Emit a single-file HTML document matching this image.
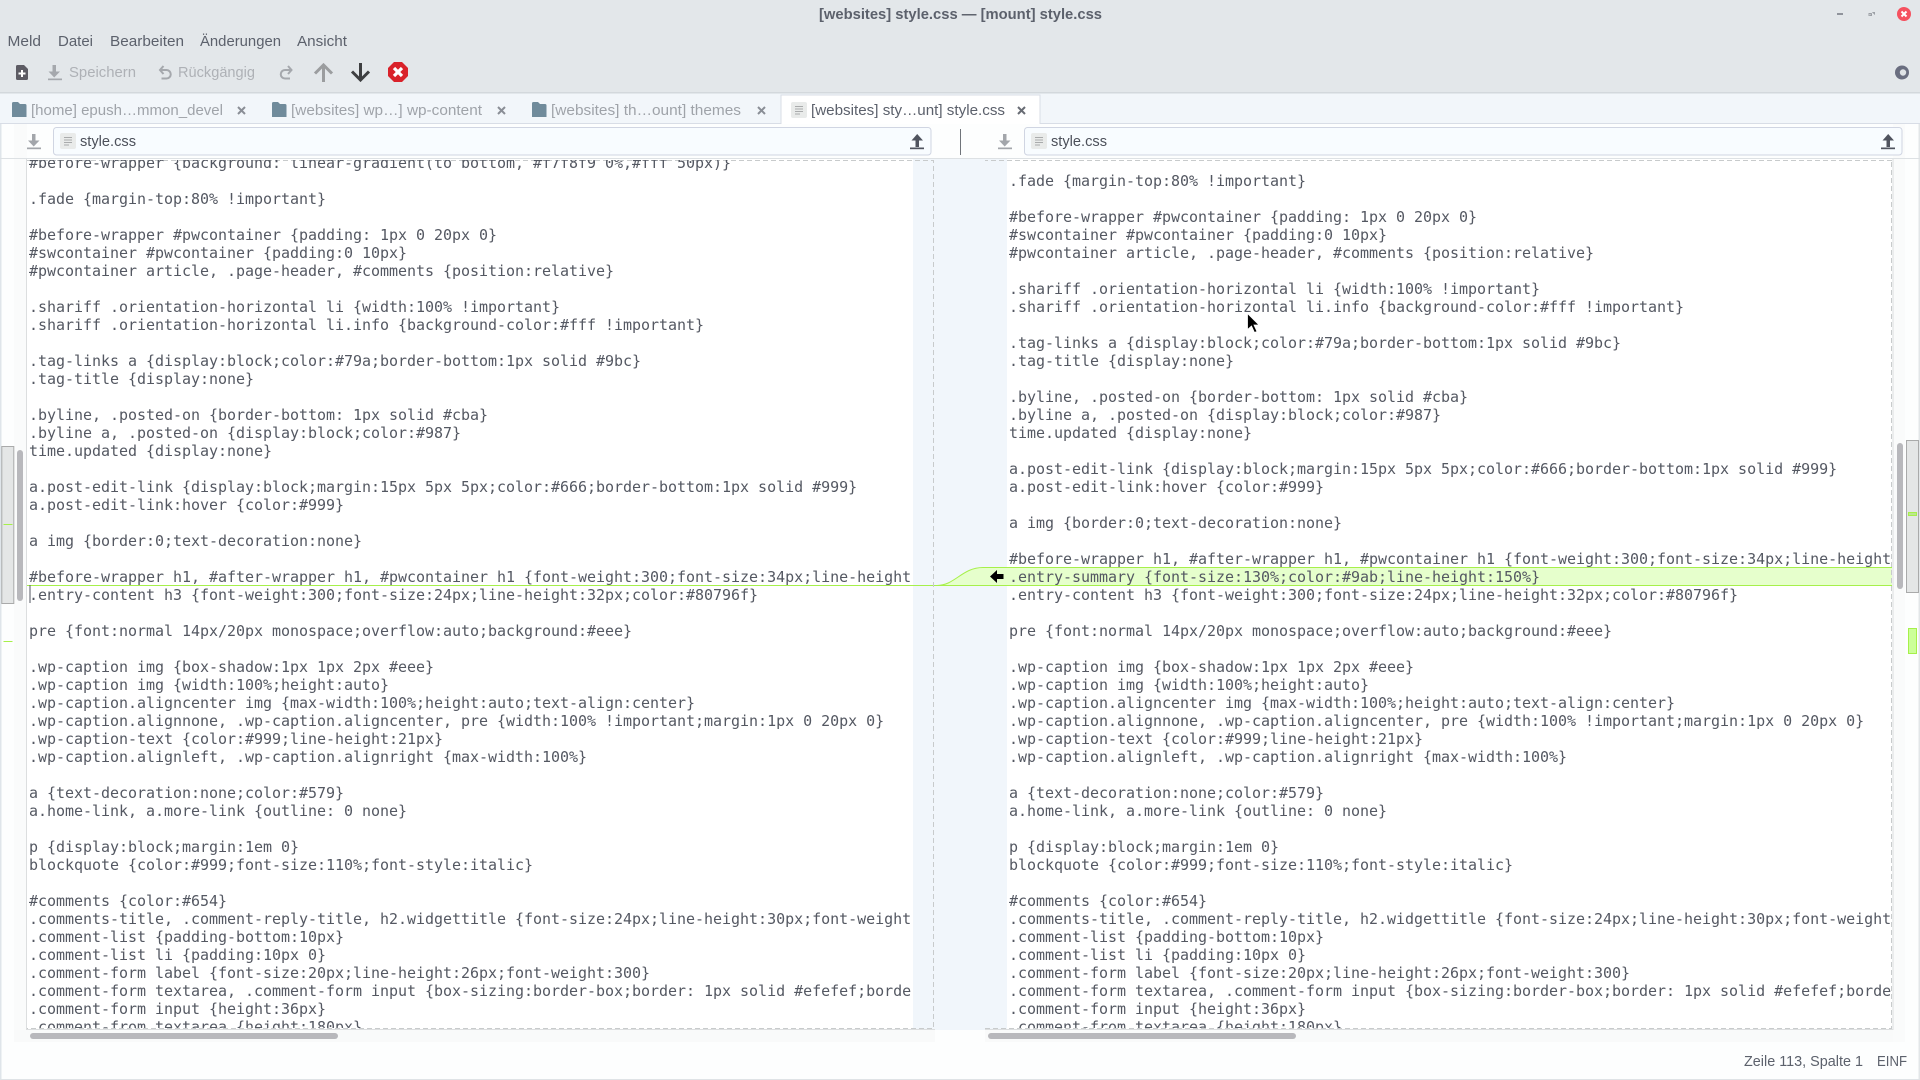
<!DOCTYPE html>
<html lang="de"><head><meta charset="utf-8"><title>[websites] style.css — [mount] style.css</title>
<style>
html,body{margin:0;padding:0;background:#fdfefe;width:1920px;height:1080px;overflow:hidden}
#w{position:relative;width:1920px;height:1080px;overflow:hidden}
svg{position:absolute;left:0;top:0}
.t{font-family:"Liberation Sans",sans-serif}
.pane{position:absolute;top:160px;height:868px;overflow:hidden}
pre{position:absolute;margin:0;font:15px/18px "DejaVu Sans Mono",monospace;color:#545862;letter-spacing:-0.03px;white-space:pre}
</style></head><body><div id="w">
<svg width="1920" height="1080" viewBox="0 0 1920 1080">
<rect width="1920" height="1080" fill="#fdfefe"/>
<rect x="0" y="0" width="1.5" height="1080" fill="#dfe5ea"/>
<rect x="1918.5" y="124" width="1.5" height="956" fill="#e2e6e8"/>
<rect y="1079" width="1920" height="1" fill="#dfe3e6"/>
<!-- header -->
<rect width="1920" height="92" fill="#e3e7ea"/>
<rect y="92" width="1920" height="1.5" fill="#d3d8dc"/>
<rect y="93.5" width="1920" height="30" fill="#f2f6fa"/>
<rect y="123" width="1920" height="1" fill="#d8dde6"/>
<!-- side gutters -->
<rect x="14" y="124" width="13" height="906" fill="#fafbfb"/>
<rect x="14" y="1030" width="921" height="12" fill="#f9fafa"/>
<rect x="985" y="1030" width="920" height="12" fill="#f9fafa"/>
<rect x="1893" y="124" width="12" height="918" fill="#fafbfb"/>
<!-- pane backgrounds -->
<rect x="27" y="159" width="886" height="870" fill="#fff"/>
<rect x="913" y="159" width="94" height="871" fill="#f1f6fb"/>
<rect x="1007" y="159" width="885" height="870" fill="#fff"/>
<!-- borders -->
<rect x="26" y="159" width="1" height="871" fill="#dcdedf"/>
<rect x="1892.5" y="159" width="1" height="871" fill="#dcdedf"/>
<rect x="26" y="1029" width="909" height="1" fill="#dcdedf"/>
<rect x="985" y="1029" width="908" height="1" fill="#dcdedf"/>
<rect y="158" width="1920" height="1" fill="#dde1e4"/>
<!-- diff highlight -->
<rect x="983" y="567" width="909" height="18" fill="#e6ffcc"/>
<path d="M937 585.5C955 585.5 962 567.5 983 567.5V585.5Z" fill="#e6ffcc"/>
<path d="M27 585.5H937C955 585.5 962 567.5 983 567.5H1892" fill="none" stroke="#a6f04a" stroke-width="1"/>
<path d="M937 585.5H1892" fill="none" stroke="#a6f04a" stroke-width="1"/>
<!-- dashed -->
<g fill="none" stroke="#c8cbcc" stroke-width="1" stroke-dasharray="5 3">
<path d="M27 160.5H933.5V1028.5H27"/>
<path d="M1892 160.5H985M985 1028.5H1891.5V160.5"/>
</g>
<!-- map overview left -->
<rect x="1.8" y="446.5" width="12" height="157" fill="#e4e6e6" stroke="#a9aaaa"/>
<rect x="3.5" y="524" width="9" height="1" fill="#a6f04a"/>
<rect x="3.5" y="641" width="9" height="1" fill="#a6f04a"/>
<rect x="17" y="450" width="6" height="151" rx="3" fill="#b8b8bc"/>
<!-- map overview right -->
<rect x="1906.5" y="440.5" width="12" height="152" fill="#e4e6e6" stroke="#a9aaaa"/>
<rect x="1908.5" y="512.5" width="8" height="3" fill="#bce78f" stroke="#a6f04a"/>
<rect x="1908.5" y="628.5" width="8" height="25" fill="#ccff99" stroke="#a6f04a"/>
<rect x="1897" y="443" width="6" height="146" rx="3" fill="#b8b8bc"/>
<!-- h scrollbars -->
<rect x="30" y="1033" width="308" height="6" rx="3" fill="#b8b8bc"/>
<rect x="988" y="1033" width="308" height="6" rx="3" fill="#b8b8bc"/>
<!-- title -->
<g class="t" fill="#5c616c">
<text x="819" y="19" font-size="14.5" font-weight="700" textLength="283" lengthAdjust="spacingAndGlyphs">[websites] style.css — [mount] style.css</text>
<g font-size="14.5">
<text x="7.5" y="46" textLength="33.5" lengthAdjust="spacingAndGlyphs">Meld</text>
<text x="58" y="46" textLength="35" lengthAdjust="spacingAndGlyphs">Datei</text>
<text x="110" y="46" textLength="74" lengthAdjust="spacingAndGlyphs">Bearbeiten</text>
<text x="200" y="46" textLength="81" lengthAdjust="spacingAndGlyphs">Änderungen</text>
<text x="297" y="46" textLength="50" lengthAdjust="spacingAndGlyphs">Ansicht</text>
</g>
<g font-size="14.5" fill="#aeb1b6">
<text x="69" y="77" textLength="67" lengthAdjust="spacingAndGlyphs">Speichern</text>
<text x="178" y="77" textLength="77" lengthAdjust="spacingAndGlyphs">Rückgängig</text>
</g>
<g font-size="14.5" fill="#9fa3a9">
<text x="31" y="115" textLength="192" lengthAdjust="spacingAndGlyphs">[home] epush…mmon_devel</text>
<text x="291" y="115" textLength="191" lengthAdjust="spacingAndGlyphs">[websites] wp…] wp-content</text>
<text x="551" y="115" textLength="190" lengthAdjust="spacingAndGlyphs">[websites] th…ount] themes</text>
</g>
</g>
<!-- window controls -->
<rect x="1837" y="13" width="6" height="2" fill="#90949c"/>
<path d="M1869 16l3-3 0 3zM1875 12l-3 0 3 3z" fill="#9ca0a6"/>
<path d="M1868.5 13h3v1h-2v2h-1zM1875 15v-3h-3" fill="#9ca0a6"/>
<circle cx="1904" cy="14" r="7" fill="#f5515f"/>
<path d="M1901.5 11.5l5 5M1906.5 11.5l-5 5" stroke="#fff" stroke-width="2"/>
<!-- toolbar icons -->
<path d="M17.5 65H24L28 69V78.5A1.5 1.5 0 0 1 26.5 80H17.5A1.5 1.5 0 0 1 16 78.5V66.5A1.5 1.5 0 0 1 17.5 65Z" fill="#5d5c64"/>
<path d="M22 70v7M18.5 73.5h7" stroke="#fff" stroke-width="2"/>
<g fill="#a5a8ad">
<path d="M52.5 65H56V71.5H60L54.2 77.5L48.5 71.5H52.5Z"/><rect x="48" y="78.5" width="14" height="1.7"/>
</g>
<g fill="none" stroke="#a5a8ad" stroke-width="2">
<path d="M163.5 66L160 70L163.5 74M160.5 70H166.5A4 4 0 0 1 166.5 78.5H161.5"/>
</g>
<g fill="none" stroke="#a5a8ad" stroke-width="2">
<path d="M288 66L291.5 70L288 74M291 70H285A4 4 0 0 0 285 78.5H290"/>
</g>
<path d="M323.5 82V65M315 73.5L323.5 65L332 73.5" fill="none" stroke="#9b9d9f" stroke-width="3"/>
<path d="M360.5 63V80M352 71.5L360.5 80L369 71.5" fill="none" stroke="#3e3f41" stroke-width="3"/>
<path d="M394 62H402L408 68V76L402 82H394L388 76V68Z" fill="#d9222a"/>
<path d="M394 68L402 76M402 68L394 76" stroke="#fff" stroke-width="3.2"/>
<circle cx="1902" cy="72.5" r="7" fill="#6a6e80"/><circle cx="1903" cy="72.5" r="3.2" fill="#dfe3e6"/>
<!-- tabs -->
<rect x="781" y="95" width="259" height="29" fill="#fff"/>
<path d="M781 124V95H1040V124" fill="none" stroke="#d8dde6"/>
<g fill="#708b9b">
<path d="M12 103.5Q12 102 13.5 102H18L20 104H25Q26.500 104 26.500 105.500V117H12Z"/>
<path d="M272 103.500Q272 102 273.500 102H278L280 104H285Q286.500 104 286.500 105.500V117H272Z"/>
<path d="M532 103.500Q532 102 533.500 102H538L540 104H545Q546.500 104 546.500 105.500V117H532Z"/>
</g>
<g stroke="#8a8e96" stroke-width="2" fill="none">
<path d="M238 107L245 114M245 107L238 114"/><path d="M498 107L505 114M505 107L498 114"/><path d="M758 107L765 114M765 107L758 114"/>
</g>
<path d="M1018 107L1025 114M1025 107L1018 114" stroke="#686c74" stroke-width="2"/>
<g>
<rect x="791" y="102" width="16" height="16" rx="2" fill="#e9ebea"/>
<path d="M795 106.500H803M795 109H803M795 111.500H803M795 114H800" stroke="#a9abac"/>
</g>
<text class="t" x="811" y="115" font-size="14.500" fill="#5c616c" textLength="194" lengthAdjust="spacingAndGlyphs">[websites] sty…unt] style.css</text>
<!-- file row -->
<rect x="53.500" y="127.500" width="877.500" height="27.500" rx="3" fill="#f8fcff" stroke="#d0d5e2"/>
<rect x="1024.500" y="127.500" width="877.500" height="27.500" rx="3" fill="#f8fcff" stroke="#d0d5e2"/>
<rect x="960" y="129" width="1" height="26" fill="#70747a"/>
<g fill="#a3a6ab">
<path d="M32 134H35.500V140.500H39.500L33.700 146.500L28 140.500H32Z"/><rect x="27" y="147.500" width="14" height="1.700"/>
<path d="M1003 134H1006.500V140.500H1010.500L1004.700 146.500L999 140.500H1003Z"/><rect x="998" y="147.500" width="14" height="1.700"/>
</g>
<g fill="#50545f">
<path d="M915.500 147V140.500H911.500L917.200 134L923 140.500H919V147Z"/><rect x="910" y="147.500" width="14" height="1.700"/>
<path d="M1886.500 147V140.500H1882.500L1888.200 134L1894 140.500H1890V147Z"/><rect x="1881" y="147.500" width="14" height="1.700"/>
</g>
<g>
<rect x="60" y="133" width="16" height="16" rx="2" fill="#e9ebea"/>
<path d="M64 137.500H72M64 140H72M64 142.500H72M64 145H69" stroke="#a9abac"/>
<rect x="1031" y="133" width="16" height="16" rx="2" fill="#e9ebea"/>
<path d="M1035 137.500H1043M1035 140H1043M1035 142.500H1043M1035 145H1040" stroke="#a9abac"/>
</g>
<g class="t" font-size="14.500" fill="#4c505a">
<text x="80" y="146" textLength="56" lengthAdjust="spacingAndGlyphs">style.css</text>
<text x="1051" y="146" textLength="56" lengthAdjust="spacingAndGlyphs">style.css</text>
</g>
<!-- status -->
<g class="t" font-size="14.500" fill="#5c616c">
<text x="1744" y="1066" textLength="119" lengthAdjust="spacingAndGlyphs">Zeile 113, Spalte 1</text>
<text x="1877" y="1066" textLength="30" lengthAdjust="spacingAndGlyphs">EINF</text>
</g>
</svg>
<div class="pane" style="left:27px;width:884px"><pre style="left:2px;top:-6px">#before-wrapper {background: linear-gradient(to bottom, #f7f8f9 0%,#fff 50px)}

.fade {margin-top:80% !important}

#before-wrapper #pwcontainer {padding: 1px 0 20px 0}
#swcontainer #pwcontainer {padding:0 10px}
#pwcontainer article, .page-header, #comments {position:relative}

.shariff .orientation-horizontal li {width:100% !important}
.shariff .orientation-horizontal li.info {background-color:#fff !important}

.tag-links a {display:block;color:#79a;border-bottom:1px solid #9bc}
.tag-title {display:none}

.byline, .posted-on {border-bottom: 1px solid #cba}
.byline a, .posted-on {display:block;color:#987}
time.updated {display:none}

a.post-edit-link {display:block;margin:15px 5px 5px;color:#666;border-bottom:1px solid #999}
a.post-edit-link:hover {color:#999}

a img {border:0;text-decoration:none}

#before-wrapper h1, #after-wrapper h1, #pwcontainer h1 {font-weight:300;font-size:34px;line-height:42px}
.entry-content h3 {font-weight:300;font-size:24px;line-height:32px;color:#80796f}

pre {font:normal 14px/20px monospace;overflow:auto;background:#eee}

.wp-caption img {box-shadow:1px 1px 2px #eee}
.wp-caption img {width:100%;height:auto}
.wp-caption.aligncenter img {max-width:100%;height:auto;text-align:center}
.wp-caption.alignnone, .wp-caption.aligncenter, pre {width:100% !important;margin:1px 0 20px 0}
.wp-caption-text {color:#999;line-height:21px}
.wp-caption.alignleft, .wp-caption.alignright {max-width:100%}

a {text-decoration:none;color:#579}
a.home-link, a.more-link {outline: 0 none}

p {display:block;margin:1em 0}
blockquote {color:#999;font-size:110%;font-style:italic}

#comments {color:#654}
.comments-title, .comment-reply-title, h2.widgettitle {font-size:24px;line-height:30px;font-weight:300}
.comment-list {padding-bottom:10px}
.comment-list li {padding:10px 0}
.comment-form label {font-size:20px;line-height:26px;font-weight:300}
.comment-form textarea, .comment-form input {box-sizing:border-box;border: 1px solid #efefef;border-radius:3px}
.comment-form input {height:36px}
.comment-from textarea {height:180px}</pre></div>
<div class="pane" style="left:1007px;width:884px"><pre style="left:2px;top:12px">.fade {margin-top:80% !important}

#before-wrapper #pwcontainer {padding: 1px 0 20px 0}
#swcontainer #pwcontainer {padding:0 10px}
#pwcontainer article, .page-header, #comments {position:relative}

.shariff .orientation-horizontal li {width:100% !important}
.shariff .orientation-horizontal li.info {background-color:#fff !important}

.tag-links a {display:block;color:#79a;border-bottom:1px solid #9bc}
.tag-title {display:none}

.byline, .posted-on {border-bottom: 1px solid #cba}
.byline a, .posted-on {display:block;color:#987}
time.updated {display:none}

a.post-edit-link {display:block;margin:15px 5px 5px;color:#666;border-bottom:1px solid #999}
a.post-edit-link:hover {color:#999}

a img {border:0;text-decoration:none}

#before-wrapper h1, #after-wrapper h1, #pwcontainer h1 {font-weight:300;font-size:34px;line-height:42px}
.entry-summary {font-size:130%;color:#9ab;line-height:150%}
.entry-content h3 {font-weight:300;font-size:24px;line-height:32px;color:#80796f}

pre {font:normal 14px/20px monospace;overflow:auto;background:#eee}

.wp-caption img {box-shadow:1px 1px 2px #eee}
.wp-caption img {width:100%;height:auto}
.wp-caption.aligncenter img {max-width:100%;height:auto;text-align:center}
.wp-caption.alignnone, .wp-caption.aligncenter, pre {width:100% !important;margin:1px 0 20px 0}
.wp-caption-text {color:#999;line-height:21px}
.wp-caption.alignleft, .wp-caption.alignright {max-width:100%}

a {text-decoration:none;color:#579}
a.home-link, a.more-link {outline: 0 none}

p {display:block;margin:1em 0}
blockquote {color:#999;font-size:110%;font-style:italic}

#comments {color:#654}
.comments-title, .comment-reply-title, h2.widgettitle {font-size:24px;line-height:30px;font-weight:300}
.comment-list {padding-bottom:10px}
.comment-list li {padding:10px 0}
.comment-form label {font-size:20px;line-height:26px;font-weight:300}
.comment-form textarea, .comment-form input {box-sizing:border-box;border: 1px solid #efefef;border-radius:3px}
.comment-form input {height:36px}
.comment-from textarea {height:180px}</pre></div>
<svg width="1920" height="1080" viewBox="0 0 1920 1080" style="pointer-events:none">
<rect x="29.500" y="585" width="1" height="18" fill="#50545f"/>
<path d="M990 576.500L997 570V574H1003.500V579H997V583Z" fill="#000"/>
<path d="M1247.500 313.500V329.500L1251.500 326L1254.500 332.500L1257 331.500L1254 325H1259Z" fill="#000" stroke="#fff" stroke-width="0.800"/>
</svg>
</div></body></html>
